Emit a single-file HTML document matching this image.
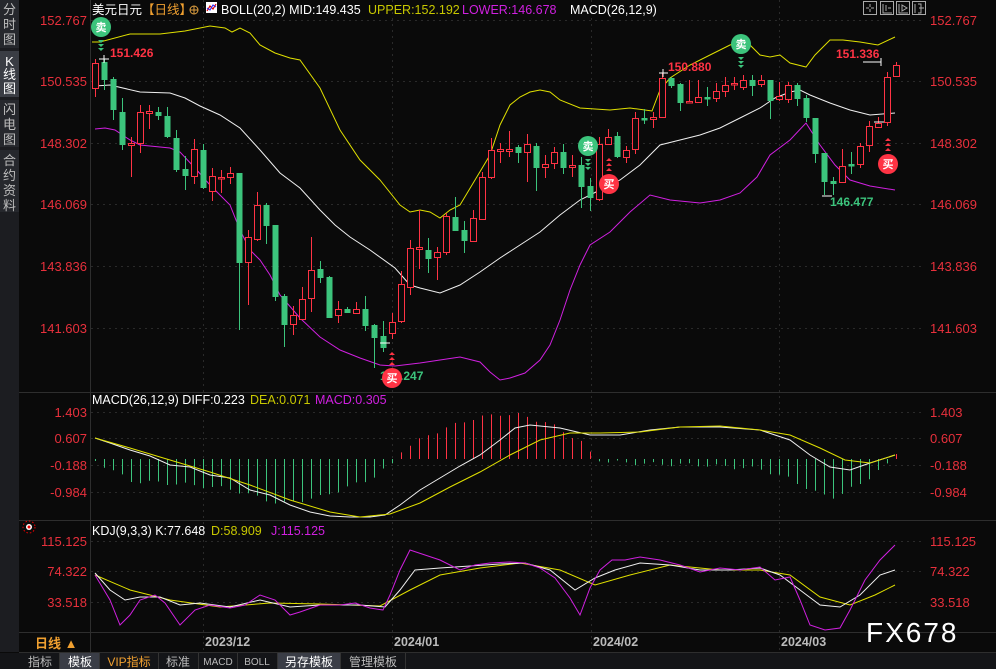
<!DOCTYPE html>
<html><head><meta charset="utf-8">
<style>
html,body{margin:0;padding:0;background:#0a0a0a;width:996px;height:669px;overflow:hidden}
svg{display:block}
text{font-family:"Liberation Sans","Noto Sans CJK SC",sans-serif}
</style></head>
<body>
<svg id="s" width="996" height="669" viewBox="0 0 996 669" xmlns="http://www.w3.org/2000/svg">
<rect width="996" height="669" fill="#0a0a0a"/>
<!-- sidebar -->
<rect x="0" y="0" width="19" height="652" fill="#1c1d21"/>
<rect x="0" y="0" width="19" height="48" fill="#26282d"/>
<rect x="0" y="51" width="19" height="46" fill="#3a3d44"/>
<rect x="0" y="100" width="19" height="47" fill="#26282d"/>
<rect x="0" y="150" width="19" height="62" fill="#26282d"/>
<g fill="#bdbdbd" font-size="13" text-anchor="middle">
<text x="9.5" y="14">分</text><text x="9.5" y="29">时</text><text x="9.5" y="44">图</text>
<text x="9.5" y="66" fill="#fff" font-family="Liberation Mono">K</text><text x="9.5" y="79" fill="#fff">线</text><text x="9.5" y="93" fill="#fff">图</text>
<text x="9.5" y="114">闪</text><text x="9.5" y="129">电</text><text x="9.5" y="144">图</text>
<text x="9.5" y="165">合</text><text x="9.5" y="180">约</text><text x="9.5" y="195">资</text><text x="9.5" y="210">料</text>
</g>
<!-- frame lines -->
<g stroke="#2e2e2e" stroke-width="1">
<line x1="90.5" y1="0" x2="90.5" y2="652"/>
<line x1="19" y1="392.5" x2="996" y2="392.5"/>
<line x1="19" y1="520.5" x2="996" y2="520.5"/>
<line x1="19" y1="632.5" x2="996" y2="632.5"/>
<line x1="19" y1="652.5" x2="996" y2="652.5"/>
</g>
<!-- grid -->
<g stroke="#2a2a2a" stroke-dasharray="2,4" stroke-width="1">
<line x1="91" y1="20.5" x2="925" y2="20.5"/><line x1="91" y1="81.5" x2="925" y2="81.5"/>
<line x1="91" y1="143.5" x2="925" y2="143.5"/><line x1="91" y1="204.5" x2="925" y2="204.5"/>
<line x1="91" y1="266.5" x2="925" y2="266.5"/><line x1="91" y1="328.5" x2="925" y2="328.5"/>
<line x1="91" y1="412.5" x2="925" y2="412.5"/><line x1="91" y1="438.5" x2="925" y2="438.5"/>
<line x1="91" y1="465.5" x2="925" y2="465.5"/><line x1="91" y1="492.5" x2="925" y2="492.5"/>
<line x1="91" y1="541.5" x2="925" y2="541.5"/><line x1="91" y1="571.5" x2="925" y2="571.5"/>
<line x1="91" y1="602.5" x2="925" y2="602.5"/>
<line x1="203.5" y1="0" x2="203.5" y2="650"/><line x1="392.5" y1="0" x2="392.5" y2="650"/>
<line x1="591.5" y1="0" x2="591.5" y2="650"/><line x1="779.5" y1="0" x2="779.5" y2="650"/>
</g>
<!-- axis labels -->
<g fill="#e8303c" font-size="13">
<g text-anchor="end">
<text x="87" y="25">152.767</text><text x="87" y="86">150.535</text><text x="87" y="148">148.302</text>
<text x="87" y="209">146.069</text><text x="87" y="271">143.836</text><text x="87" y="333">141.603</text>
<text x="87" y="417">1.403</text><text x="87" y="443">0.607</text><text x="87" y="470">-0.188</text><text x="87" y="497">-0.984</text>
<text x="87" y="546">115.125</text><text x="87" y="576">74.322</text><text x="87" y="607">33.518</text>
</g>
<text x="930" y="25">152.767</text><text x="930" y="86">150.535</text><text x="930" y="148">148.302</text>
<text x="930" y="209">146.069</text><text x="930" y="271">143.836</text><text x="930" y="333">141.603</text>
<text x="930" y="417">1.403</text><text x="930" y="443">0.607</text><text x="930" y="470">-0.188</text><text x="930" y="497">-0.984</text>
<text x="930" y="546">115.125</text><text x="930" y="576">74.322</text><text x="930" y="607">33.518</text>
</g>
<g id="plot"></g>
<!-- header -->
<g font-size="12.5">
<text x="92" y="14" fill="#fff">美元日元<tspan fill="#f0a030">【日线】</tspan></text>
<circle cx="194" cy="10" r="4" fill="none" stroke="#e0a040" stroke-width="1"/><line x1="190" y1="10" x2="198" y2="10" stroke="#e0a040"/><line x1="194" y1="6" x2="194" y2="14" stroke="#e0a040"/>
<rect x="206" y="2" width="11" height="11" fill="#fff"/><polyline points="207,11 210,6 213,9 216,4" fill="none" stroke="#d00" stroke-width="1.2"/><polyline points="207,8 210,10 213,5 216,7" fill="none" stroke="#22f" stroke-width="1"/>
<text x="221" y="14" fill="#fff">BOLL(20,2) MID:149.435</text>
<text x="368" y="14" fill="#c8c800">UPPER:152.192</text>
<text x="462" y="14" fill="#d020e0">LOWER:146.678</text>
<text x="570" y="14" fill="#fff">MACD(26,12,9)</text>
<text x="92" y="404" fill="#fff">MACD(26,12,9) DIFF:0.223</text>
<text x="250" y="404" fill="#c8c800">DEA:0.071</text>
<text x="315" y="404" fill="#d020e0">MACD:0.305</text>
<text x="92" y="535" fill="#fff">KDJ(9,3,3) K:77.648</text>
<text x="211" y="535" fill="#c8c800">D:58.909</text>
<text x="271" y="535" fill="#d020e0">J:115.125</text>
</g>
<!-- kdj icon -->
<circle cx="29" cy="527" r="3" fill="#fff"/><circle cx="29" cy="527" r="1.5" fill="#e00"/>
<circle cx="29" cy="527" r="6" fill="none" stroke="#e00" stroke-dasharray="1.5,2"/>
<!-- top right icons -->
<g fill="none" stroke="#aaa" stroke-width="1">
<rect x="863.5" y="1.5" width="13" height="13"/><rect x="880.5" y="1.5" width="13" height="13"/>
<rect x="896.5" y="1.5" width="13" height="13"/><rect x="912.5" y="1.5" width="13" height="13"/>
<path d="M866 8h3M871 8h3M870 4v3M870 9v3"/><path d="M883 4v9h9M886 5v6M888 8h3"/>
<path d="M899 4v9h9M902 5l5 3l-5 3z"/><path d="M915 4v9M918 4h3v9h-3M919 8h5"/>
</g>
<!-- annotations -->
<g font-size="12" font-weight="bold">
<text x="110" y="57" fill="#ff3344">151.426</text>
<text x="668" y="71" fill="#ff3344">150.880</text>
<text x="836" y="58" fill="#ff3344">151.336</text>
<text x="830" y="206" fill="#3cc47c">146.477</text>
<text x="380" y="380" fill="#3cc47c">141.247</text>
</g>
<g font-size="11" font-weight="bold" text-anchor="middle">
<circle cx="101" cy="27" r="10" fill="#3cc47c"/><text x="101" y="31" fill="#fff">卖</text>
<circle cx="588" cy="146" r="10" fill="#3cc47c"/><text x="588" y="150" fill="#fff">卖</text>
<circle cx="741" cy="44" r="10" fill="#3cc47c"/><text x="741" y="48" fill="#fff">卖</text>
<circle cx="392" cy="378" r="10" fill="#ff3344"/><text x="392" y="382" fill="#fff">买</text>
<circle cx="609" cy="184" r="10" fill="#ff3344"/><text x="609" y="188" fill="#fff">买</text>
<circle cx="888" cy="164" r="10" fill="#ff3344"/><text x="888" y="168" fill="#fff">买</text>
</g>
<g fill="#3cc47c">
<path d="M98 40h6l-3 3zM98 44h6l-3 3zM98 48h6l-3 3"/>
<path d="M585 159h6l-3 3zM585 163h6l-3 3zM585 167h6l-3 3"/>
<path d="M738 57h6l-3 3zM738 61h6l-3 3zM738 65h6l-3 3"/>
</g>
<g fill="#ff3344">
<path d="M389 365h6l-3-3zM389 360h6l-3-3zM389 355h6l-3-3"/>
<path d="M606 171h6l-3-3zM606 166h6l-3-3zM606 161h6l-3-3"/>
<path d="M885 151h6l-3-3zM885 146h6l-3-3zM885 141h6l-3-3"/>
</g>
<!-- date row -->
<g fill="#bbb" font-size="12.5" font-weight="bold">
<text x="205" y="646">2023/12</text><text x="394" y="646">2024/01</text>
<text x="593" y="646">2024/02</text><text x="781" y="646">2024/03</text>
</g>
<text x="35" y="648" fill="#f0a030" font-size="13" font-weight="bold">日线 ▲</text>
<text x="866" y="642" fill="#fff" font-size="28" letter-spacing="2" font-family="Liberation Sans">FX678</text>
<!-- bottom tabs -->
<rect x="0" y="653" width="996" height="16" fill="#141518"/>
<g font-size="12" text-anchor="middle">
<rect x="60" y="653" width="39" height="16" fill="#3a3d46"/>
<rect x="277" y="653" width="63" height="16" fill="#3a3d46"/>
<text x="40" y="666" fill="#bbb">指标</text>
<text x="80" y="666" fill="#fff">模板</text>
<text x="129" y="666" fill="#f0a030">VIP指标</text>
<text x="178" y="666" fill="#bbb">标准</text>
<text x="218" y="665" fill="#bbb" font-size="10" font-family="Liberation Mono">MACD</text>
<text x="257" y="665" fill="#bbb" font-size="10" font-family="Liberation Mono">BOLL</text>
<text x="309" y="666" fill="#fff">另存模板</text>
<text x="373" y="666" fill="#bbb">管理模板</text>
</g>
<g stroke="#333"><line x1="59.5" y1="653" x2="59.5" y2="669"/><line x1="99.5" y1="653" x2="99.5" y2="669"/><line x1="158.5" y1="653" x2="158.5" y2="669"/><line x1="198.5" y1="653" x2="198.5" y2="669"/><line x1="237.5" y1="653" x2="237.5" y2="669"/><line x1="277.5" y1="653" x2="277.5" y2="669"/><line x1="340.5" y1="653" x2="340.5" y2="669"/><line x1="405.5" y1="653" x2="405.5" y2="669"/></g>
</svg>
<script>
var NS="http://www.w3.org/2000/svg",P=document.getElementById("plot");
function el(t,a){var e=document.createElementNS(NS,t);for(var k in a)e.setAttribute(k,a[k]);P.appendChild(e);return e}
function line(pts,c){el("polyline",{points:pts.map(function(p){return p.join(",")}).join(" "),fill:"none",stroke:c,"stroke-width":1})}
var C=[[88,63,59,97],[62,79,59,90],[79,109,77,120],[112,144,98,150],[145,143,137,177],[143,112,105,153],[113,111,105,129],[112,115,107,120],[116,136,107,138],[138,169,130,172],[169,175,156,190],[176,149,139,184],[150,187,144,189],[191,176,168,201],[178,177,170,193],[177,173,167,184],[173,262,173,330],[262,237,230,305],[239,205,192,241],[205,225,203,244],[225,296,225,301],[296,324,294,347],[324,315,306,335],[319,299,287,320],[298,270,237,312],[269,277,261,283],[277,317,276,318],[315,309,301,323],[309,312,307,312],[313,309,302,313],[309,325,296,331],[325,337,324,368],[336,347,321,352],[333,322,313,339],[321,284,271,323],[287,248,240,295],[249,247,210,269],[250,258,238,273],[257,252,247,280],[252,216,213,255],[217,230,197,230],[230,240,221,253],[241,218,210,241],[219,177,172,219],[177,150,138,179],[151,149,143,163],[151,149,131,157],[147,152,145,163],[152,144,134,182],[146,167,143,191],[167,164,155,178],[163,152,147,169],[152,167,144,174],[167,165,155,177],[165,186,157,208],[186,197,178,211],[199,144,137,201],[144,137,129,145],[136,156,132,158],[157,150,146,163],[149,118,112,154],[118,119,109,124],[119,117,112,128],[117,78,73,118],[78,85,77,88],[84,102,83,111],[102,101,80,103],[102,97,80,103],[97,98,87,106],[98,91,83,102],[91,85,77,97],[84,83,77,90],[87,80,75,90],[80,85,75,96],[84,80,75,87],[80,100,80,119],[99,96,82,101],[99,85,82,103],[85,98,83,106],[98,117,95,122],[118,153,118,163],[153,181,153,195],[181,183,177,195],[182,166,149,183],[164,165,152,174],[164,146,143,168],[145,126,121,152],[127,123,117,127],[122,77,72,126],[76,65,62,77]];
var R="#ff3344",G="#3cc47c";
// bollinger
line([[92,42],[100,42],[130,34],[160,34],[185,31],[210,26],[225,28],[232,32],[240,28],[250,33],[260,45],[275,53],[290,58],[300,60],[320,88],[340,130],[360,160],[380,180],[400,205],[410,212],[420,210],[430,212],[440,218],[450,210],[460,205],[475,180],[490,155],[500,125],[510,105],[520,97],[530,92],[540,90],[550,92],[560,100],[580,108],[610,110],[630,108],[652,111],[660,90],[670,78],[690,65],[710,55],[730,45],[740,42],[750,45],[760,55],[770,57],[780,55],[790,63],[806,67],[815,55],[830,40],[843,40],[860,42],[878,45],[895,37]],"#e0e000");
line([[95,86],[110,85],[140,92],[170,93],[185,98],[200,106],[220,115],[240,128],[260,150],[280,173],[300,188],[320,210],[335,225],[350,237],[370,250],[395,268],[410,285],[420,288],[440,293],[460,285],[480,272],[500,258],[520,245],[540,232],[560,215],[580,200],[600,190],[620,180],[640,165],[660,145],[680,140],[700,135],[720,128],[740,118],[760,108],[775,98],[790,92],[800,90],[810,95],[830,103],[850,110],[870,115],[895,113]],"#f0f0f0");
line([[95,129],[105,128],[115,130],[130,140],[140,145],[170,148],[180,152],[195,168],[210,185],[230,205],[240,230],[250,250],[260,260],[270,275],[280,295],[300,318],[320,337],[340,350],[360,358],[380,365],[395,366],[420,363],[440,360],[460,357],[480,362],[490,372],[500,380],[510,378],[525,373],[540,360],[550,345],[560,320],[570,290],[580,265],[590,245],[610,232],[630,212],[650,195],[670,200],[700,203],[720,200],[740,193],[757,177],[770,155],[790,140],[806,123],[820,145],[835,165],[850,180],[870,186],[895,190]],"#d020e0");
C.forEach(function(c,i){var x=95+i*9,o=c[0],cl=c[1],up=cl<o,col=up?R:G;
 el("line",{x1:x+.5,y1:c[2],x2:x+.5,y2:c[3],stroke:col});
 var t=Math.min(o,cl),h=Math.max(Math.abs(o-cl),1.5);
 if(up)el("rect",{x:x-2.5,y:t+.5,width:6,height:h,fill:"#0a0a0a",stroke:col});
 else el("rect",{x:x-2.5,y:t,width:6,height:h+1,fill:col});});
// extra markers
el("path",{d:"M99 59h10M104 55v8M380 343h10M874 122h10M822 196h10M863 62h18M881 58v8M659 73h9M663 69v8",stroke:"#fff",fill:"none"});
// MACD histogram
var K=[[95,2],[110,10],[130,22],[180,25],[230,30],[280,45],[320,38],[370,20],[395,3],[400,-8],[430,-25],[470,-40],[500,-45],[520,-44],[550,-35],[580,-18],[595,0],[610,3],[650,5],[700,6],[760,10],[790,20],[820,36],[835,38],[860,25],[880,10],[893,3],[896,-6]];
function interp(x){for(var j=0;j<K.length-1;j++){if(x>=K[j][0]&&x<=K[j+1][0]){var f=(x-K[j][0])/(K[j+1][0]-K[j][0]);return K[j][1]+f*(K[j+1][1]-K[j][1]);}}return 0}
for(var i=0;i<90;i++){var x=95+i*9+.5,v=interp(x-.5)+Math.sin(i*1.7)*2;el("line",{x1:x,y1:459,x2:x,y2:459+v,stroke:v<0?R:G});}
line([[95,438],[110,443],[130,450],[150,456],[170,465],[190,467],[210,475],[230,478],[250,490],[270,495],[290,505],[310,512],[330,516],[350,517],[370,517],[385,515],[400,505],[420,490],[440,478],[460,466],[480,455],[500,440],[515,428],[530,425],[560,428],[590,435],[620,435],[650,430],[680,427],[720,427],[760,430],[790,440],[810,455],[830,467],[850,470],[870,463],[895,455]],"#f0f0f0");
line([[95,438],[130,448],[170,460],[210,472],[250,485],[290,500],[330,512],[360,517],[390,514],[420,503],[450,487],[480,472],[510,455],[540,440],[570,433],[600,433],[640,432],[680,427],[720,426],[760,430],[790,435],[820,448],[845,460],[870,463],[895,455]],"#e0e000");
// KDJ
line([[95,575],[130,590],[170,600],[220,607],[270,603],[320,604],[380,606],[410,590],[440,575],[480,568],[520,563],[560,570],[595,585],[630,575],[670,565],[720,570],[760,570],[790,575],[820,597],[850,605],[875,595],[895,585]],"#e0e000");
line([[95,573],[110,590],[125,600],[140,597],[160,597],[180,605],[200,603],[230,607],[260,600],[290,607],[320,605],[360,605],[385,607],[400,590],[415,570],[440,568],[470,566],[500,564],[525,563],[550,570],[575,590],[595,578],[615,570],[640,563],[670,565],[700,570],[730,570],[760,568],[780,575],[800,590],[820,605],[840,607],[860,595],[880,575],[895,570]],"#f0f0f0");
line([[95,575],[110,600],[120,625],[130,615],[140,600],[155,595],[165,603],[180,625],[195,610],[210,605],[230,608],[245,605],[260,595],[275,600],[290,615],[300,612],[320,605],[340,605],[355,603],[370,608],[383,610],[390,595],[400,570],[410,550],[425,555],[440,560],[460,570],[475,565],[490,563],[510,562],[525,563],[540,568],[555,578],[570,598],[580,615],[590,588],[600,570],[612,560],[625,560],[640,557],[660,560],[680,565],[700,572],[720,568],[740,570],[760,567],[775,580],[790,577],[800,600],[810,625],[825,630],[840,628],[850,610],[865,580],[880,560],[895,545]],"#d020e0");
</script>
</body></html>
